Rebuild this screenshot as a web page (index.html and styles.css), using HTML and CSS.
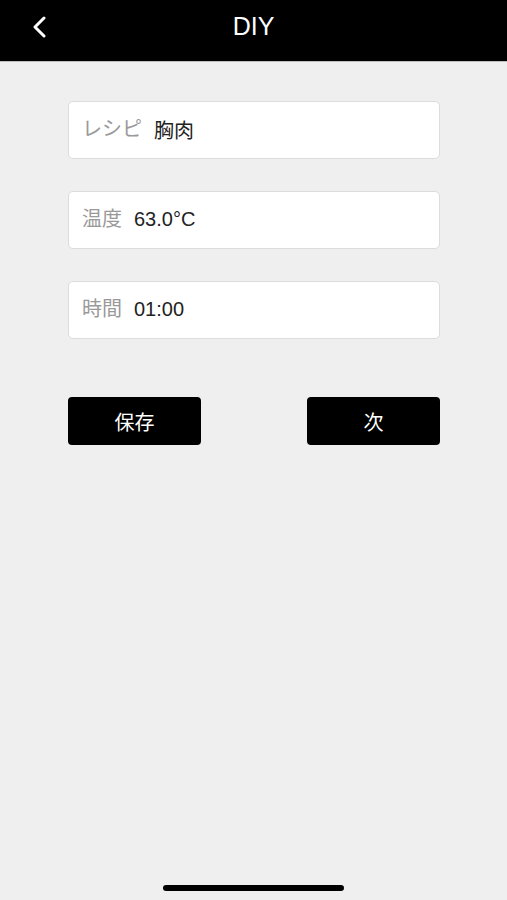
FILE: index.html
```html
<!DOCTYPE html>
<html lang="ja">
<head>
  <meta charset="UTF-8" />
  <meta name="viewport" content="width=device-width, initial-scale=1.0" />
  <title>DIY</title>
  <link rel="stylesheet" href="styles.css">
</head>
<body>
  <div class="header">
    <a class="back" href="#">
      <svg width="16" height="22" viewBox="0 0 16 22">
        <path d="M13 2 L4 11 L13 20" fill="none" stroke="#fff" stroke-width="3" stroke-linecap="round" stroke-linejoin="round"/>
      </svg>
    </a>
    <h1>DIY</h1>
  </div>

  <div class="form">
    <div class="field">
      <span class="label">レシピ</span>
      <span class="value">胸肉</span>
    </div>
    <div class="field">
      <span class="label">温度</span>
      <span class="value">63.0°C</span>
    </div>
    <div class="field">
      <span class="label">時間</span>
      <span class="value">01:00</span>
    </div>

    <div class="actions">
      <button class="btn">保存</button>
      <button class="btn">次</button>
    </div>
  </div>

  <div class="home-bar"></div>
</body>
</html>
```

FILE: styles.css
```css
html, body {
  margin: 0;
  padding: 0;
}
body {
  width: 507px;
  height: 900px;
  background-color: #efefef;
  font-family: "Liberation Sans", Arial, "Noto Sans CJK JP", sans-serif;
  color: #333;
  display: flex;
  flex-direction: column;
  overflow: hidden;
}
.header {
  height: 61px;
  background-color: #000;
  border-bottom: 1px solid #bdbdbd;
  display: flex;
  align-items: center;
  justify-content: center;
  position: relative;
}
.header h1 {
  margin: 0;
  color: #fff;
  font-size: 25px;
  font-weight: normal;
  margin-top: -8px;
}
.back {
  position: absolute;
  left: 31px;
  top: 16px;
  display: block;
}
.form {
  padding: 39px 67px 0 68px;
  display: flex;
  flex-direction: column;
  gap: 32px;
  flex: 1;
}
.field {
  height: 56px;
  background-color: #fff;
  border: 1px solid #dcdcdc;
  border-radius: 5px;
  display: flex;
  align-items: center;
  padding: 0 13px;
  font-size: 20px;
}
.label {
  color: #999;
  margin-right: 12px;
  margin-top: -5px;
}
.value {
  color: #222;
  margin-top: -1px;
}
.actions {
  display: flex;
  justify-content: space-between;
  margin-top: 26px;
}
.btn {
  width: 133px;
  height: 48px;
  background-color: #000;
  color: #fff;
  border: none;
  border-radius: 4px;
  font-family: inherit;
  font-size: 20px;
  padding: 0;
}
.home-bar {
  width: 181px;
  height: 6px;
  background-color: #000;
  border-radius: 3px;
  margin: 0 auto 9px;
}
```
